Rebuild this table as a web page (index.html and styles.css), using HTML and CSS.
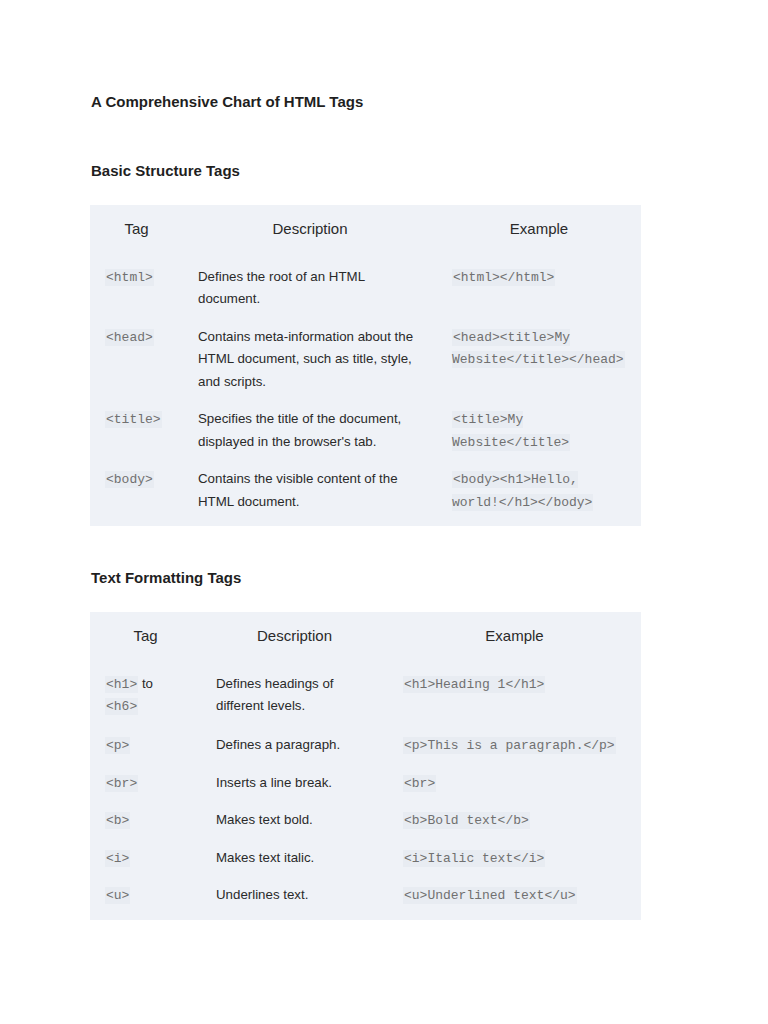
FILE: index.html
```html
<!DOCTYPE html>
<html lang="en">
<head>
<meta charset="utf-8">
<title>A Comprehensive Chart of HTML Tags</title>
<link rel="stylesheet" href="styles.css">
</head>
<body>
<main class="page">
  <h1 class="title">A Comprehensive Chart of HTML Tags</h1>

  <h2 class="section">Basic Structure Tags</h2>
  <table class="chart chart-basic">
    <colgroup><col class="c1"><col class="c2"><col class="c3"></colgroup>
    <thead>
      <tr><th>Tag</th><th>Description</th><th>Example</th></tr>
    </thead>
    <tbody>
      <tr><td><code>&lt;html&gt;</code></td><td>Defines the root of an HTML document.</td><td><code>&lt;html&gt;&lt;/html&gt;</code></td></tr>
      <tr><td><code>&lt;head&gt;</code></td><td>Contains meta-information about the HTML document, such as title, style, and scripts.</td><td><code>&lt;head&gt;&lt;title&gt;My Website&lt;/title&gt;&lt;/head&gt;</code></td></tr>
      <tr><td><code>&lt;title&gt;</code></td><td>Specifies the title of the document, displayed in the browser's tab.</td><td><code>&lt;title&gt;My Website&lt;/title&gt;</code></td></tr>
      <tr class="last"><td><code>&lt;body&gt;</code></td><td>Contains the visible content of the HTML document.</td><td><code>&lt;body&gt;&lt;h1&gt;Hello, world!&lt;/h1&gt;&lt;/body&gt;</code></td></tr>
    </tbody>
  </table>

  <h2 class="section">Text Formatting Tags</h2>
  <table class="chart chart-text">
    <colgroup><col class="c1"><col class="c2"><col class="c3"></colgroup>
    <thead>
      <tr><th>Tag</th><th>Description</th><th>Example</th></tr>
    </thead>
    <tbody>
      <tr class="first"><td><code>&lt;h1&gt;</code> to <code>&lt;h6&gt;</code></td><td>Defines headings of different levels.</td><td><code>&lt;h1&gt;Heading 1&lt;/h1&gt;</code></td></tr>
      <tr><td><code>&lt;p&gt;</code></td><td>Defines a paragraph.</td><td><code>&lt;p&gt;This is a paragraph.&lt;/p&gt;</code></td></tr>
      <tr><td><code>&lt;br&gt;</code></td><td>Inserts a line break.</td><td><code>&lt;br&gt;</code></td></tr>
      <tr><td><code>&lt;b&gt;</code></td><td>Makes text bold.</td><td><code>&lt;b&gt;Bold text&lt;/b&gt;</code></td></tr>
      <tr><td><code>&lt;i&gt;</code></td><td>Makes text italic.</td><td><code>&lt;i&gt;Italic text&lt;/i&gt;</code></td></tr>
      <tr class="last"><td><code>&lt;u&gt;</code></td><td>Underlines text.</td><td><code>&lt;u&gt;Underlined text&lt;/u&gt;</code></td></tr>
    </tbody>
  </table>
</main>
</body>
</html>
```

FILE: styles.css
```css
html, body {
  margin: 0;
  padding: 0;
  background: #ffffff;
}

body {
  font-family: "Liberation Sans", Arial, sans-serif;
  color: #222222;
}

.page {
  width: 551px;
  padding: 92px 0 0 90px;
}

.title {
  margin: 0;
  font-size: 15px;
  line-height: 20px;
  font-weight: bold;
  color: #1f1f1f;
  padding-left: 1px;
}

.section {
  margin: 0;
  font-size: 15px;
  line-height: 20px;
  font-weight: bold;
  color: #1f1f1f;
  padding-left: 1px;
}

.title + .section {
  margin-top: 49px;
}

.chart {
  width: 551px;
  margin-top: 24px;
  margin-bottom: 42px;
  border-collapse: collapse;
  table-layout: fixed;
  background: #eff2f7;
}

.chart-basic .c1 { width: 93px; }
.chart-basic .c2 { width: 254px; }
.chart-basic .c3 { width: 204px; }

.chart-text .c1 { width: 111px; }
.chart-text .c2 { width: 187px; }
.chart-text .c3 { width: 253px; }

.chart th {
  font-weight: normal;
  font-size: 15px;
  line-height: 24px;
  color: #2a2a2a;
  text-align: center;
  padding: 12px 15px 17px;
}

.chart td {
  font-size: 13.3px;
  line-height: 22.5px;
  color: #2a2a2a;
  vertical-align: top;
  text-align: left;
  padding: 7.5px 15px;
}

.chart tr.first td {
  padding-bottom: 9px;
}

.chart tr.last td {
  padding-bottom: 13px;
}

.chart code {
  font-family: "Liberation Mono", "Courier New", monospace;
  font-size: 13px;
  line-height: 1;
  color: #707070;
  background: #e8ecf2;
  padding: 1px 1px;
}
```
